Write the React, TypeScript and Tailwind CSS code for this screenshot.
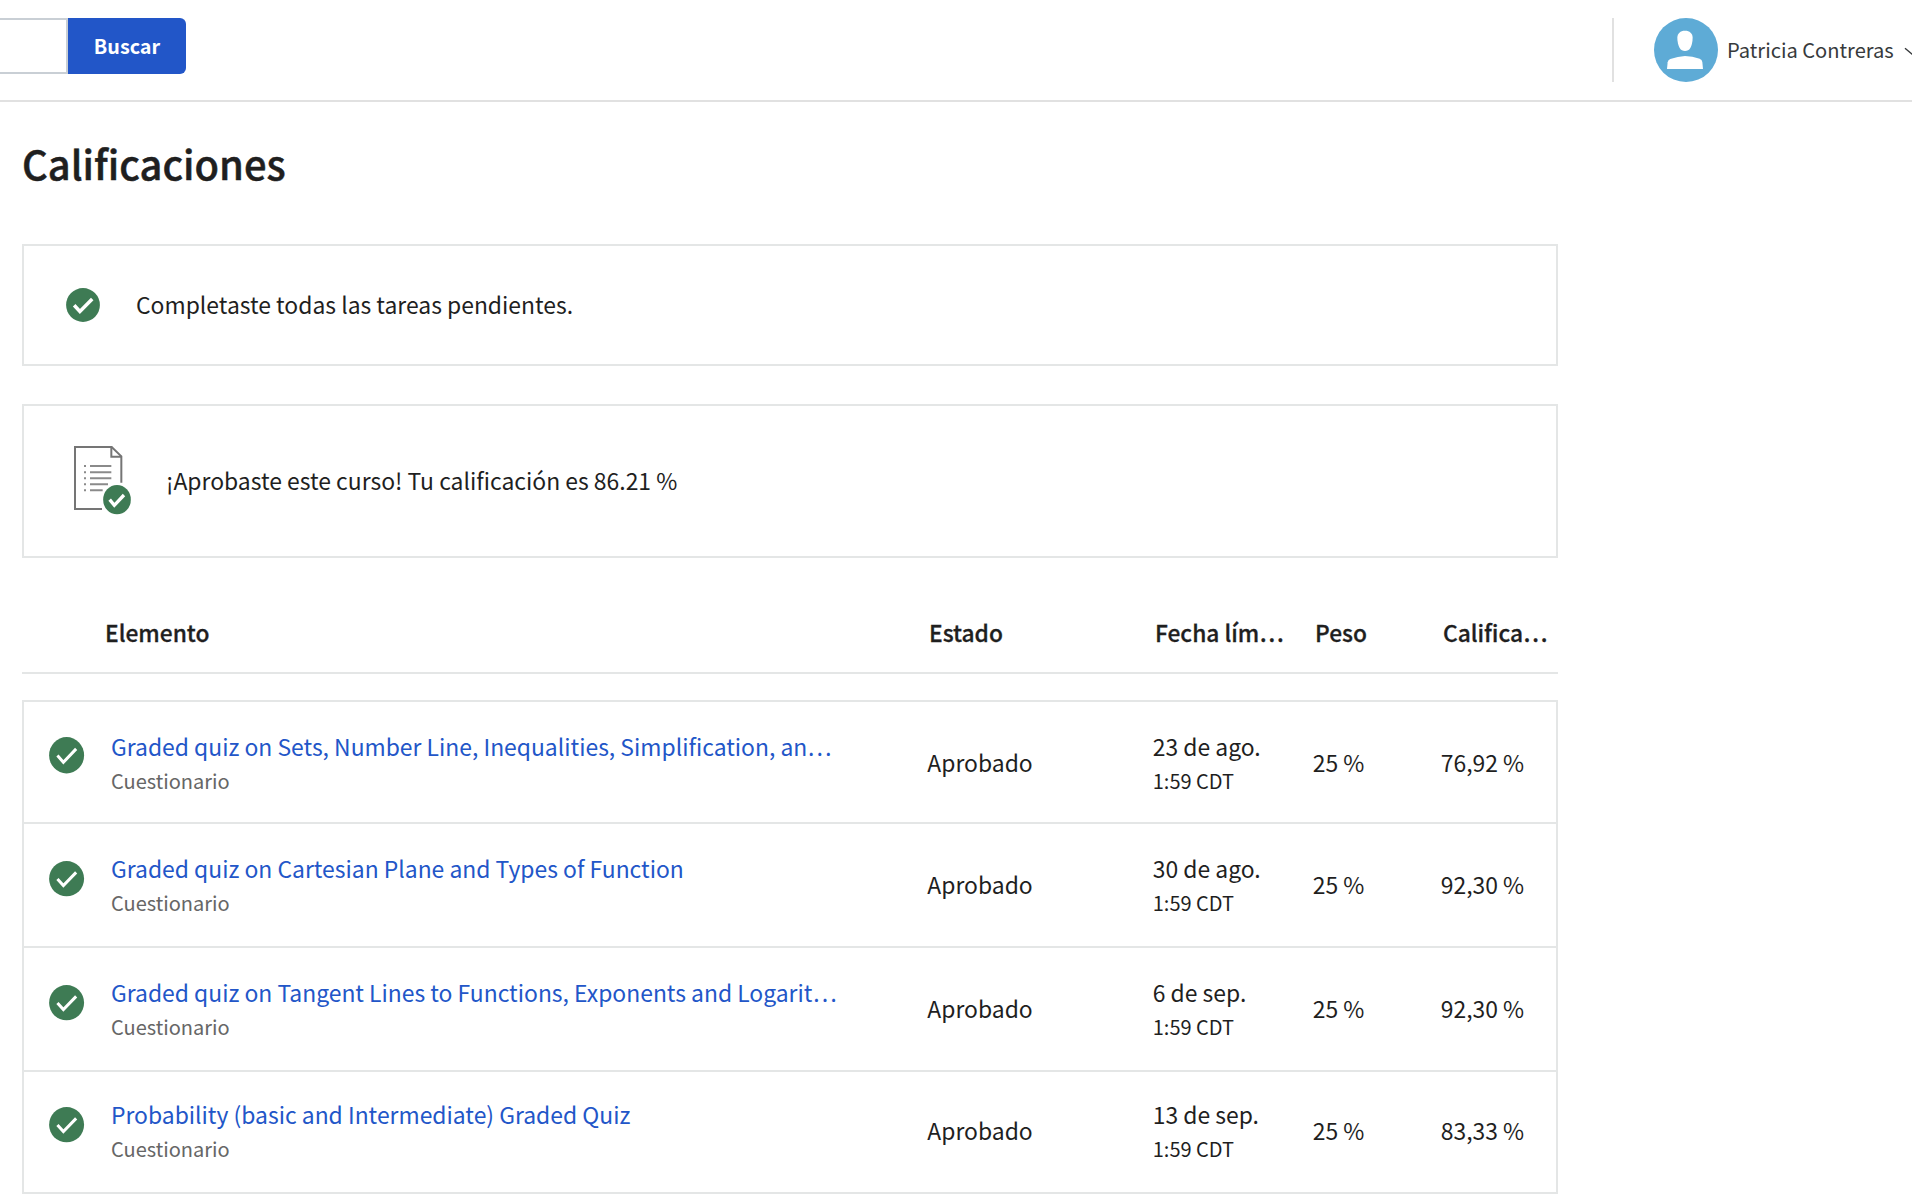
import React from "react";

type Row = {
  title: string;
  date: string;
  grade: string;
  rowClass: string;
  iconClass: string;
};

const rows: Row[] = [
  {
    title: "Graded quiz on Sets, Number Line, Inequalities, Simplification, an…",
    date: "23 de ago.",
    grade: "76,92 %",
    rowClass: "h-[122px] border-b-2 pt-[27px]",
    iconClass: "mt-[8.3px] h-[36.5px]",
  },
  {
    title: "Graded quiz on Cartesian Plane and Types of Function",
    date: "30 de ago.",
    grade: "92,30 %",
    rowClass: "h-[124px] border-b-2 pt-[27px]",
    iconClass: "mt-[10.2px] h-[35.4px]",
  },
  {
    title: "Graded quiz on Tangent Lines to Functions, Exponents and Logarit…",
    date: "6 de sep.",
    grade: "92,30 %",
    rowClass: "h-[124px] border-b-2 pt-[27px]",
    iconClass: "mt-[10.2px] h-[35.4px]",
  },
  {
    title: "Probability (basic and Intermediate) Graded Quiz",
    date: "13 de sep.",
    grade: "83,33 %",
    rowClass: "h-[120px] pt-[25px]",
    iconClass: "mt-[10.2px] h-[35.4px]",
  },
];

function Check({ className, weight = 3 }: { className: string; weight?: number }) {
  return (
    <svg viewBox="0 0 35 35" preserveAspectRatio="none" className={`shrink-0 ${className}`}>
      <circle cx="17.5" cy="17.5" r="17.4" fill="#3e7b54" />
      <path d="M8.4 17.8 L14.3 24.2 L27 11.3" fill="none" stroke="#fff" strokeWidth={weight} />
    </svg>
  );
}

function DocumentIcon() {
  return (
    <svg viewBox="0 0 270 270" className="mt-[24px] ml-[36px] size-[90px] shrink-0">
      <g fill="none" stroke="#757575" strokeWidth="6">
        <path d="M126 237 H45 V51 H155 L184 79 V158" />
        <path d="M154 50 V80 H185" />
      </g>
      <g stroke="#8a8a8a" strokeWidth="6">
        <path d="M90 108 H154 M90 127 H154 M90 145 H154 M90 163 H144 M90 181 H128" />
        <path d="M72 108 H78 M72 127 H78 M72 145 H78 M72 163 H78 M72 181 H78" />
      </g>
      <ellipse cx="171" cy="209" rx="41.5" ry="44" fill="#3e7b54" />
      <path d="M149 209 L163 226 L192 195" fill="none" stroke="#fff" strokeWidth="10" />
    </svg>
  );
}

function Avatar() {
  return (
    <svg viewBox="0 0 192 192" className="size-16 shrink-0">
      <circle cx="96" cy="96" r="96" fill="#5eabd6" />
      <path
        d="M93 38 C107 38 116 46 116 59 C116 72 113 82 109 90 C105 97 100 99 93 99 C86 99 81 97 77 90 C73 82 70 72 70 59 C70 46 79 38 93 38 Z"
        fill="#fff"
      />
      <path
        d="M39 153 L41 133 Q42 126 49 123 Q72 115 93 114 Q115 115 137 122 Q144 125 145 132 L147 153 Z"
        fill="#fff"
      />
    </svg>
  );
}

export default function App() {
  return (
    <div className="h-[1198px] w-[1912px] overflow-hidden bg-white font-['Noto_Sans_CJK_SC',sans-serif] text-[#1f1f1f]">
      <header className="flex h-[102px] border-b-2 border-[#e1e1e1]">
        <div className="mt-[18px] h-[56px] w-[68px] border-y-2 border-r-2 border-[#c9cfd5]" />
        <button className="mt-[18px] h-[56px] w-[118px] rounded-r-[6px] bg-[#2256c8] text-[19.8px] font-bold text-white">
          Buscar
        </button>
        <div className="mt-[18px] ml-auto flex h-[64px] w-[300px] overflow-hidden border-l-2 border-[#e1e1e1] pl-[40px]">
          <Avatar />
          <span className="ml-[9px] text-[20.1px] leading-[64px] whitespace-nowrap text-[#373a3c]">
            Patricia Contreras
          </span>
          <svg viewBox="0 0 18 10" className="mt-[29px] ml-[10px] h-[10px] w-[18px] shrink-0">
            <path d="M1 1.2 L9 8 L17 1.2" fill="none" stroke="#373a3c" strokeWidth="1.4" />
          </svg>
        </div>
      </header>

      <main className="ml-[22px] w-[1536px]">
        <h1 className="pt-[32px] text-[39.9px] leading-[58px] font-medium [-webkit-text-stroke:0.5px_#1f1f1f]">
          Calificaciones
        </h1>

        <section className="mt-[52px] flex h-[122px] border-2 border-[#e4e6e6] pl-[42px] text-[22.9px] leading-[36px]">
          <Check className="mt-[42px] size-[34px]" weight={3.6} />
          <p className="mt-[40px] ml-[36px]">Completaste todas las tareas pendientes.</p>
        </section>

        <section className="mt-[38px] flex h-[154px] border-2 border-[#e4e6e6] text-[22.92px] leading-[36px]">
          <DocumentIcon />
          <p className="mt-[56px] ml-[16px]">¡Aprobaste este curso! Tu calificación es 86.21 %</p>
        </section>

        <div className="flex h-[116px] border-b-2 border-[#e4e6e6] pt-[57px] pl-[83px] text-[22.75px] leading-[36px] font-medium [-webkit-text-stroke:0.3px_#1f1f1f]">
          <span className="w-[824px]">Elemento</span>
          <span className="w-[226px]">Estado</span>
          <span className="w-[160px]">Fecha lím…</span>
          <span className="w-[128px]">Peso</span>
          <span>Califica…</span>
        </div>

        <div className="mt-[26px] border-2 border-[#e4e6e6] text-[22.9px] leading-[34px]">
          {rows.map((row) => (
            <div key={row.title} className={`flex border-[#e4e6e6] pl-[25.4px] ${row.rowClass}`}>
              <Check className={`w-[35.2px] ${row.iconClass}`} />
              <div className="ml-[26.4px] w-[816.4px]">
                <p className="text-[#2256c8]">{row.title}</p>
                <p className="text-[20px] leading-[36px] text-[#666]">Cuestionario</p>
              </div>
              <p className="mt-[16px] w-[225.4px]">Aprobado</p>
              <div className="w-[160px]">
                <p>{row.date}</p>
                <p className="text-[20px] leading-[36px]">1:59 CDT</p>
              </div>
              <p className="mt-[16px] w-[128px]">25 %</p>
              <p className="mt-[16px]">{row.grade}</p>
            </div>
          ))}
        </div>
      </main>
    </div>
  );
}
